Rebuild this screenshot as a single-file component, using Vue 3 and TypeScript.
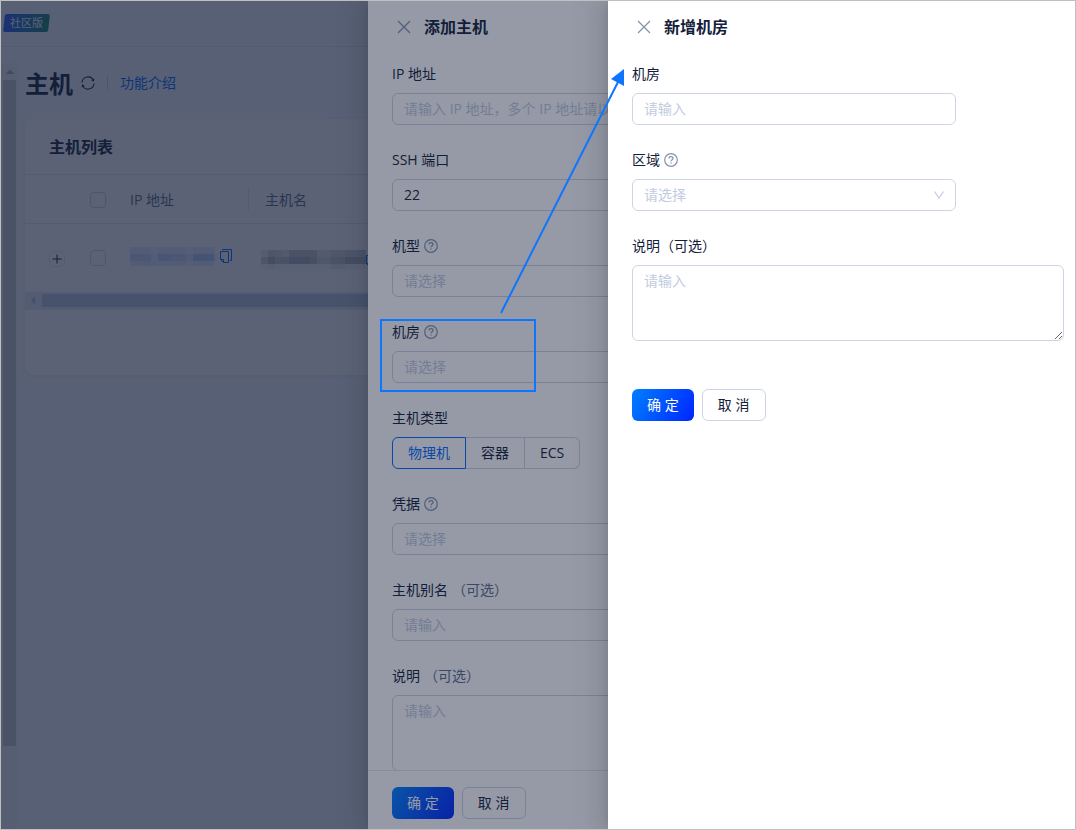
<script setup lang="ts">
import { ref } from 'vue'

interface Field {
  id: string
  label: string
  kind: 'input' | 'select' | 'textarea' | 'radio'
  placeholder?: string
  help?: boolean
  optional?: boolean
}

const hostFields: Field[] = [
  { id: 'ip', label: 'IP 地址', kind: 'input', placeholder: '请输入 IP 地址，多个 IP 地址请以逗号分隔' },
  { id: 'port', label: 'SSH 端口', kind: 'input' },
  { id: 'model', label: '机型', kind: 'select', placeholder: '请选择', help: true },
  { id: 'idc', label: '机房', kind: 'select', placeholder: '请选择', help: true },
  { id: 'type', label: '主机类型', kind: 'radio' },
  { id: 'credential', label: '凭据', kind: 'select', placeholder: '请选择', help: true },
  { id: 'alias', label: '主机别名', kind: 'input', placeholder: '请输入', optional: true },
  { id: 'desc', label: '说明', kind: 'textarea', placeholder: '请输入', optional: true },
]

const roomFields: Field[] = [
  { id: 'room-name', label: '机房', kind: 'input', placeholder: '请输入' },
  { id: 'room-region', label: '区域', kind: 'select', placeholder: '请选择', help: true },
  { id: 'room-desc', label: '说明（可选）', kind: 'textarea', placeholder: '请输入' },
]

const drawers = [
  { key: 'host', title: '添加主机', fields: hostFields },
  { key: 'room', title: '新增机房', fields: roomFields },
]

const values = ref<Record<string, string>>({
  ip: '', port: '22', model: '', idc: '', credential: '', alias: '', desc: '',
  'room-name': '', 'room-region': '', 'room-desc': '',
})
const hostTypes = ['物理机', '容器', 'ECS']
const hostType = ref('物理机')

const ipCells = [
  [3, 3, 3, 2, 3, 3, 3, 3, 2, 3, 3, 3, 1],
  [6, 6, 6, 3, 7, 7, 6, 6, 4, 8, 8, 8, 2],
  [3, 3, 4, 3, 3, 3, 3, 3, 2, 3, 3, 3, 1],
]
const nameCells = [
  [2, 5, 4, 3, 6, 6, 6, 6, 3, 3, 4, 4, 5, 5, 6],
  [5, 8, 6, 6, 8, 8, 8, 7, 4, 4, 6, 6, 8, 8, 8],
  [1, 2, 1, 1, 1, 1, 1, 1, 1, 1, 2, 2, 1, 1, 1],
]
</script>

<template>
  <div class="frame">
    <div class="page">
      <header class="topbar"><span class="edition"><span>社区版</span></span></header>
      <div class="workspace">
        <div class="vscroll">
          <svg width="14" height="17" viewBox="0 0 14 17"><path d="M2.500 11L7 6.500L11.500 11Z" fill="#b3b3b3" /></svg>
          <div class="vthumb"></div>
        </div>
        <main class="content">
          <div class="heading">
            <h1>主机</h1>
            <button class="bare" aria-label="刷新">
              <svg width="14" height="14" viewBox="0 0 14 14" fill="none" stroke="#132039" stroke-width="1.100">
                <path d="M1 6.500A6 6 0 0 1 12.500 4.600M13 7.500A6 6 0 0 1 1.500 9.400" />
                <path d="M13.300 2.400L13 5.400L10.200 4.500ZM0.700 11.600L1 8.600L3.800 9.500Z" fill="#132039" stroke="none" />
              </svg>
            </button>
            <i class="rule"></i>
            <a href="#intro">功能介绍</a>
          </div>
          <section class="card">
            <h2>主机列表</h2>
            <table>
              <colgroup><col class="c1" /><col class="c2" /><col class="c3" /><col /></colgroup>
              <thead>
                <tr>
                  <th></th>
                  <th class="tick"><input type="checkbox" aria-label="全选" /></th>
                  <th class="divided">IP 地址</th>
                  <th>主机名</th>
                </tr>
              </thead>
              <tbody>
                <tr>
                  <td class="lead">
                    <button class="expand" aria-label="展开">
                      <svg width="10" height="10" viewBox="0 0 10 10"><path d="M0.500 5H9.500M5 0.500V9.500" stroke="#132039" stroke-width="1" /></svg>
                    </button>
                  </td>
                  <td class="tick"><input type="checkbox" aria-label="选择主机" /></td>
                  <td class="address">
                    <div class="masked">
                      <svg width="87" height="19" viewBox="0 0 87 19" shape-rendering="crispEdges">
                        <template v-for="(row, r) in ipCells" :key="r">
                          <rect v-for="(v, c) in row" :key="c" :x="c * 7" :y="r * 7" width="7" height="7" fill="#0a50ff" :opacity="v * 0.035" />
                        </template>
                      </svg>
                      <button class="bare" aria-label="复制">
                        <svg width="12" height="14" viewBox="0 0 12 14" fill="none" stroke="#006aff" stroke-width="1">
                          <path d="M2 0.500H11.500V11.500H10" />
                          <path d="M0.500 2.500H8.500V13.500H3.500L0.500 10.500ZM0.500 10.500H3.500V13.500" />
                        </svg>
                      </button>
                    </div>
                  </td>
                  <td class="name">
                    <div class="masked">
                      <svg width="105" height="19" viewBox="0 0 105 19" shape-rendering="crispEdges">
                        <template v-for="(row, r) in nameCells" :key="r">
                          <rect v-for="(v, c) in row" :key="c" :x="c * 7" :y="r * 7" width="7" height="7" fill="#132039" :opacity="v * 0.04" />
                        </template>
                      </svg>
                      <button class="bare joined" aria-label="复制">
                        <svg width="12" height="14" viewBox="0 0 12 14" fill="none" stroke="#006aff" stroke-width="1">
                          <path d="M2 0.500H11.500V11.500H10" />
                          <path d="M0.500 2.500H8.500V13.500H3.500L0.500 10.500ZM0.500 10.500H3.500V13.500" />
                        </svg>
                      </button>
                    </div>
                  </td>
                </tr>
              </tbody>
            </table>
            <div class="hscroll">
              <svg width="17" height="13" viewBox="0 0 17 13"><path d="M10 2.500L6 6.500L10 10.500Z" fill="#b4bfd8" /></svg>
              <div class="hthumb"></div>
            </div>
          </section>
        </main>
      </div>
    </div>

    <template v-for="d in drawers" :key="d.key">
      <div class="veil"></div>
      <aside class="drawer" :class="d.key">
        <div class="drawer-head">
          <button class="close" aria-label="关闭">
            <svg width="14" height="14" viewBox="0 0 14 14"><path d="M1 1L13 13M13 1L1 13" stroke="#8592ad" stroke-width="1.300" /></svg>
          </button>
          <h2>{{ d.title }}</h2>
        </div>
        <form class="fields" @submit.prevent>
          <div v-for="f in d.fields" :key="f.id" class="field">
            <div class="label">
              <label v-if="f.kind !== 'radio'" :for="f.id">{{ f.label }}</label>
              <span v-else :id="f.id">{{ f.label }}</span>
              <span v-if="f.optional" class="optional">（可选）</span>
              <svg v-if="f.help" width="14" height="14" viewBox="0 0 14 14" fill="none" stroke="#8592ad" stroke-width="1.200">
                <circle cx="7" cy="7" r="6.300" />
                <path d="M5 5.500C5 4.300 5.900 3.700 7 3.700S9 4.400 9 5.400C9 6.700 7 6.700 7 8.200" />
                <circle cx="7" cy="10" r="0.700" fill="#8592ad" stroke="none" />
              </svg>
            </div>
            <input v-if="f.kind === 'input'" :id="f.id" v-model="values[f.id]" class="control" type="text" :placeholder="f.placeholder" />
            <div v-else-if="f.kind === 'select'" class="select">
              <select :id="f.id" v-model="values[f.id]" class="control">
                <option value="">{{ f.placeholder }}</option>
              </select>
              <svg width="10" height="8" viewBox="0 0 10 8" fill="none" stroke="#c1cbe0" stroke-width="1.200"><path d="M0.500 0.500L5 7L9.500 0.500" /></svg>
            </div>
            <textarea v-else-if="f.kind === 'textarea'" :id="f.id" v-model="values[f.id]" class="control" :placeholder="f.placeholder"></textarea>
            <div v-else class="radios" role="radiogroup" :aria-labelledby="f.id">
              <label v-for="t in hostTypes" :key="t" :class="{ on: hostType === t }">
                <input v-model="hostType" type="radio" name="host-type" :value="t" />{{ t }}
              </label>
            </div>
          </div>
        </form>
        <div class="actions">
          <button class="primary">确 定</button>
          <button class="secondary">取 消</button>
        </div>
      </aside>
    </template>

    <svg class="callout" width="707" height="400" viewBox="368 1 707 400" fill="none" stroke="#0f75ff" stroke-width="2" aria-hidden="true">
      <rect x="381" y="320" width="154" height="71" />
      <path d="M501 313L618 82" />
      <path d="M624 69V86L611 79Z" fill="#0f75ff" stroke="none" />
    </svg>
  </div>
</template>

<style>
body { margin: 0; }
</style>

<style scoped>
* { box-sizing: border-box; }
.frame {
  position: relative;
  height: 100vh;
  min-height: 600px;
  border: 1px solid #c0c0c0;
  overflow: hidden;
  color: #132039;
  font: 14px/22px "Open Sans", "Noto Sans CJK SC", sans-serif;
}
button, input, select, textarea { font: inherit; color: inherit; margin: 0; }
h1, h2 { margin: 0; font-weight: 700; }
h2 { font-size: 16px; line-height: 24px; }
svg { display: block; flex: none; }
.bare { border: 0; padding: 0; background: none; }

.page { height: 100%; display: flex; flex-direction: column; background: #f5f8fe; }
.topbar { height: 46px; flex: none; padding: 13px 3px; border-bottom: 1px solid #dfe5f0; }
.edition {
  display: block;
  width: 45px;
  height: 18px;
  border-radius: 2px;
  transform: skewX(-6deg);
  background: linear-gradient(90deg, #2a5cff, #1a8a70);
  color: #fff;
  font-size: 11px;
  line-height: 18px;
  text-align: center;
}
.edition span { display: block; transform: skewX(6deg); }
.workspace { flex: 1; min-height: 0; display: flex; }
.vscroll { width: 16px; margin-top: 16px; padding: 0 1px 0 2px; background: #f0f2f6; }
.vthumb { height: 87%; background: #c8c8cc; }
.content { flex: 1; padding: 20px 24px 0 8px; min-width: 0; }
.heading { display: flex; align-items: center; height: 32px; margin-bottom: 20px; }
.heading h1 { font-size: 24px; line-height: 32px; padding-top: 2px; margin-right: 8px; }
.rule { width: 1px; height: 14px; margin: 0 12px; background: #cdd5e4; }
.heading a { color: #006aff; text-decoration: none; }
.card { height: 256px; border-radius: 8px; background: #fff; overflow: hidden; box-shadow: 0 1px 4px #e2e8f3; }
.card h2 { padding: 16px 24px 15px; }
table { width: 100%; border-collapse: collapse; table-layout: fixed; }
.c1 { width: 57px; }
.c2 { width: 32px; }
.c3 { width: 135px; }
th, td { padding: 0 16px; text-align: left; font-weight: 400; }
th { position: relative; height: 49px; padding-top: 2px; border: solid #e2e8f3; border-width: 1px 0; color: #5c6b8a; }
td { height: 68px; }
.divided::after { content: ""; position: absolute; right: 0; top: 13px; width: 1px; height: 22px; background: #dfe5f0; }
td.tick { padding: 0 8px; }
th.tick { padding: 2px 8px 0; }
.lead { padding: 2px 0 0 24px; }
.address { padding-bottom: 3px; }
.name { padding: 4px 12px 0; }
.tick input { display: block; appearance: none; width: 16px; height: 16px; border: 1px solid #cdd5e4; border-radius: 4px; background: #fff; }
.expand { display: grid; place-items: center; width: 16px; height: 16px; padding: 0; border: 1px solid #e2e8f3; border-radius: 5px; background: none; }
.masked { display: flex; align-items: center; gap: 3px; }
.joined { margin-left: -3px; }
.hscroll { display: flex; height: 18px; padding: 2px 0 3px; background: #e6ebf7; }
.hthumb { flex: 1; background: #c0cbe0; }

.veil { position: absolute; inset: 0; background: rgba(19, 32, 57, 0.45); }
.drawer {
  position: absolute;
  inset: 0 0 0 auto;
  max-width: 100%;
  display: flex;
  flex-direction: column;
  background: #fff;
  box-shadow: -6px 0 16px rgba(0, 0, 0, 0.08), -3px 0 6px -4px rgba(0, 0, 0, 0.12), -9px 0 28px 8px rgba(0, 0, 0, 0.05);
}
.drawer.host { width: 707px; }
.drawer.room { width: 467px; }
.drawer-head { display: flex; align-items: center; gap: 8px; flex: none; height: 52px; padding: 0 24px; }
.close { display: grid; place-items: center; width: 24px; height: 24px; padding: 0; border: 0; background: none; }
.fields { display: flex; flex-direction: column; gap: 24px; padding: 10px 11px 0 24px; min-height: 0; }
.host .fields { flex: 1; overflow: hidden; }
.label { display: flex; align-items: center; height: 22px; margin-bottom: 8px; }
.label svg { margin-left: 4px; }
.optional { margin-left: 4px; color: #5c6b8a; }
.control {
  display: block;
  width: 100%;
  height: 32px;
  padding: 4px 11px;
  border: 1px solid #cdd5e4;
  border-radius: 6px;
  background: #fff;
  outline: 0;
}
input.control { padding: 3px 11px 5px; }
.room input.control, .room .select { width: 75%; }
.control::placeholder { color: #c1cbe0; opacity: 1; }
textarea.control { height: 76px; resize: vertical; }
select.control { appearance: none; color: #c1cbe0; }
.select { position: relative; }
.select svg { position: absolute; right: 12px; top: 12px; pointer-events: none; }
.radios { display: flex; }
.radios label { height: 32px; padding: 4px 15px; border: 1px solid #cdd5e4; border-left-width: 0; }
.radios label:first-child { border-left-width: 1px; border-radius: 6px 0 0 6px; }
.radios label:last-child { border-radius: 0 6px 6px 0; }
.radios label.on { border-color: #006aff; color: #006aff; }
.radios input { position: absolute; opacity: 0; pointer-events: none; }
.actions { display: flex; gap: 8px; flex: none; padding: 48px 24px 0; }
.host .actions { padding: 16px 24px 10px; border-top: 1px solid #dfe5f0; }
.actions button { height: 32px; border-radius: 6px; padding: 0 15px; }
.primary { border: 0; background: linear-gradient(120deg, #0080ff, #0025ff); color: #fff; }
.actions .secondary { min-width: 64px; border: 1px solid #cdd5e4; background: #fff; }
.callout { position: absolute; top: 0; right: 0; pointer-events: none; }
</style>
